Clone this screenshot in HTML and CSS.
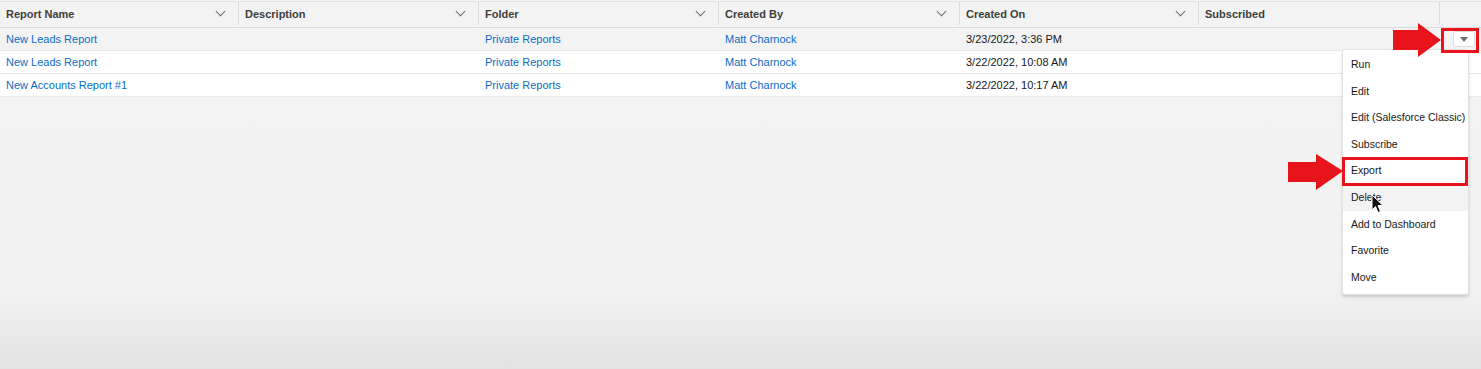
FILE: index.html
```html
<!DOCTYPE html>
<html>
<head>
  <meta charset="UTF-8">
  <title>Reports</title>
  <link rel="stylesheet" href="styles.css">
</head>
<body>

  <div class="list">
    <div class="head">
      <div class="th">Report Name <span class="chev"></span></div>
      <div class="th">Description <span class="chev"></span></div>
      <div class="th">Folder <span class="chev"></span></div>
      <div class="th">Created By <span class="chev"></span></div>
      <div class="th">Created On <span class="chev"></span></div>
      <div class="th">Subscribed</div>
      <div class="th last"></div>
    </div>

    <div class="row hover">
      <div class="td"><a href="#">New Leads Report</a></div>
      <div class="td"></div>
      <div class="td"><a href="#">Private Reports</a></div>
      <div class="td"><a href="#">Matt Charnock</a></div>
      <div class="td">3/23/2022, 3:36 PM</div>
      <div class="td"></div>
      <div class="td action"><button class="menu-btn"><span class="tri"></span></button></div>
    </div>
    <div class="row">
      <div class="td"><a href="#">New Leads Report</a></div>
      <div class="td"></div>
      <div class="td"><a href="#">Private Reports</a></div>
      <div class="td"><a href="#">Matt Charnock</a></div>
      <div class="td">3/22/2022, 10:08 AM</div>
      <div class="td"></div>
      <div class="td action"></div>
    </div>
    <div class="row">
      <div class="td"><a href="#">New Accounts Report #1</a></div>
      <div class="td"></div>
      <div class="td"><a href="#">Private Reports</a></div>
      <div class="td"><a href="#">Matt Charnock</a></div>
      <div class="td">3/22/2022, 10:17 AM</div>
      <div class="td"></div>
      <div class="td action"></div>
    </div>
  </div>

  <!-- row action menu -->
  <ul class="menu">
    <li>Run</li>
    <li>Edit</li>
    <li>Edit (Salesforce Classic)</li>
    <li>Subscribe</li>
    <li>Export</li>
    <li class="hover">Delete</li>
    <li>Add to Dashboard</li>
    <li>Favorite</li>
    <li>Move</li>
  </ul>

  <!-- annotations drawn over the screen -->
  <div class="mark mark-btn"></div>
  <div class="mark mark-export"></div>

  <svg class="arrow arrow-btn" width="50" height="36" viewBox="0 0 50 36">
    <polygon points="0,7 25,7 25,0 48,17 25,34 25,27 0,27" fill="#e8141c"/>
  </svg>
  <svg class="arrow arrow-export" width="56" height="37" viewBox="0 0 56 37">
    <polygon points="0,8 28,8 28,0 55,17 28,36 28,28 0,28" fill="#e8141c"/>
  </svg>

  <svg class="cursor" width="13" height="20" viewBox="0 0 13 20">
    <polygon points="1,1 1,16 4.5,12.5 7,18.5 9.5,17.5 7,11.5 12,11.5" fill="#111" stroke="#fff" stroke-width="1"/>
  </svg>

</body>
</html>
```

FILE: styles.css
```css
* {
  box-sizing: border-box;
  margin: 0;
  padding: 0;
}

body {
  font-family: 'Liberation Sans', Arial, sans-serif;
  font-size: 11px;
  color: #181818;
  height: 369px;
  overflow: hidden;
  background: linear-gradient(#f3f3f3 0, #f2f2f2 290px, #e3e3e3 369px);
  position: relative;
}

.list {
  border-top: 1px solid #e2e2e2;
  margin-top: 1px;
}

.head,
.row {
  display: grid;
  grid-template-columns: 239px 240px 240px 241px 239px 241px 1fr;
}

.head {
  height: 26px;
  padding-bottom: 2px;
  background-color: #f3f3f3;
  border-bottom: 1px solid #dddbda;
}

.th {
  display: flex;
  align-items: center;
  justify-content: space-between;
  padding: 0 14px 0 6px;
  font-weight: 700;
  color: #3e3e3c;
  border-right: 1px solid #dddbda;
}

.th.last {
  border-right: none;
}

.chev {
  width: 7px;
  height: 7px;
  border-right: 1px solid #706e6b;
  border-bottom: 1px solid #706e6b;
  transform: translateY(-2px) rotate(45deg);
}

.row {
  height: 23px;
  background-color: #fff;
  border-bottom: 1px solid #e8e8e8;
}

.row.hover {
  background-color: #f3f3f3;
}

.td {
  display: flex;
  align-items: center;
  padding: 0 6px;
  color: #181818;
  white-space: nowrap;
}

.td a {
  color: #0b6dc4;
  text-decoration: none;
}

.td.action {
  justify-content: flex-end;
  padding: 0 6px 0 0;
}

.menu-btn {
  width: 22px;
  height: 16px;
  background-color: #fff;
  border: 1px solid #dddbda;
  border-radius: 3px;
  display: flex;
  align-items: center;
  justify-content: center;
}

.tri {
  border-left: 4px solid transparent;
  border-right: 4px solid transparent;
  border-top: 5px solid #706e6b;
}

.menu {
  position: absolute;
  left: 1342px;
  top: 49px;
  width: 127px;
  padding: 1px 0 4px;
  list-style: none;
  background-color: #fff;
  border: 1px solid #e3e3e3;
  border-radius: 3px;
  box-shadow: 0 2px 3px rgba(0, 0, 0, 0.16);
}

.menu li {
  height: 26.6px;
  line-height: 26.6px;
  padding-left: 8px;
  font-size: 10.5px;
  white-space: nowrap;
  color: #181818;
}

.menu li.hover {
  background-color: #f3f3f3;
}

.mark {
  position: absolute;
  border: 3px solid #e8141c;
}

.mark-btn {
  left: 1441px;
  top: 28px;
  width: 38px;
  height: 25px;
}

.mark-export {
  left: 1342px;
  top: 157px;
  width: 126px;
  height: 29px;
}

.arrow {
  position: absolute;
}

.arrow-btn {
  left: 1393px;
  top: 23px;
}

.arrow-export {
  left: 1288px;
  top: 154px;
}

.cursor {
  position: absolute;
  left: 1371px;
  top: 194px;
}
```
